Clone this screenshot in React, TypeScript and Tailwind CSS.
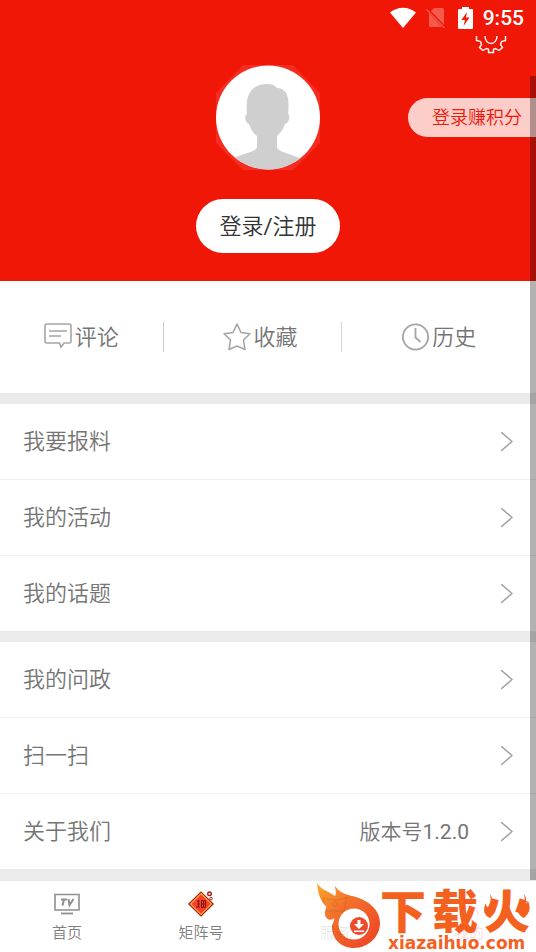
import React from 'react';

const FONT = "font-['Roboto','Noto_Sans_CJK_SC',sans-serif]";

const REPORT_ITEMS = [{ label: '我要报料' }, { label: '我的活动' }, { label: '我的话题' }];

const SERVICE_ITEMS = [
  { label: '我的问政' },
  { label: '扫一扫' },
  { label: '关于我们', version: '1.2.0' },
];

const StatusBar: React.FC = () => (
  <div className="flex h-9 items-center justify-end pr-3 text-white">
    <svg width="28" height="22" viewBox="0 0 28 22" fill="currentColor">
      <path d="M0 5.500C7.500-.8 18.500-.8 26 5.500L13 21Z" />
    </svg>
    <svg className="ml-2" width="20" height="22" viewBox="0 0 20 22">
      <path d="M8 1h8.500a1.500 1.500 0 0 1 1.500 1.500V20H4.500A1.500 1.500 0 0 1 3 18.500V6Z" fill="#f65a4d" />
      <path d="M1 2l18 19" stroke="#ef1706" strokeWidth="3" />
      <path d="M.5 2.500l18 18.500" stroke="#f4584b" strokeWidth="1.500" />
    </svg>
    <svg className="ml-3" width="15" height="22" viewBox="0 0 15 22">
      <path d="M4 0h7v2h3a1 1 0 0 1 1 1v18a1 1 0 0 1-1 1H1a1 1 0 0 1-1-1V3a1 1 0 0 1 1-1h3Z" fill="#fff" />
      <path d="M9 5L3.500 13H7L5.500 19 11.500 10.500H8Z" fill="#f01706" />
    </svg>
    <span className="ml-[10px] text-[21px] font-medium leading-6">9:55</span>
  </div>
);

const Avatar: React.FC = () => (
  <svg className="mx-auto block" width="106" height="106" viewBox="0 0 106 106">
    <path d="M28 0H78L105 28V78L78 105H28L1 78V28Z" fill="#f42d20" />
    <circle cx="53" cy="52.500" r="52" fill="#fff" />
    <clipPath id="avatar-clip">
      <circle cx="53" cy="52.500" r="52" />
    </clipPath>
    <path
      clipPath="url(#avatar-clip)"
      fill="#cfcfcf"
      d="M32 49C30 32 35 19 52 19c5 0 8 1 10 4 10 0 13 10 11 26 2 0 2 9-3 10-2 6-5 9-8 12v11c0 5 16 7 24 12v14H17V94c8-5 25-7 25-12V71c-4-3-7-8-8-12-4-1-5-9-2-10Z"
    />
  </svg>
);

const CommentIcon: React.FC = () => (
  <svg width="30" height="30" viewBox="0 0 30 30" fill="none" stroke="#a5a5a5" strokeWidth="1.600">
    <path d="M4 2h21a2 2 0 0 1 2 2v15a2 2 0 0 1-2 2h-5l-3 4-1.500-4H3a2 2 0 0 1-2-2V4a2 2 0 0 1 2-2Z" />
    <path d="M5 9h18M5 14h12" />
  </svg>
);

const StarIcon: React.FC = () => (
  <svg width="30" height="30" viewBox="0 0 30 30" fill="none" stroke="#a5a5a5" strokeWidth="1.600" strokeLinejoin="round">
    <path d="M15 2l4 8.500 9 1.200-6.500 6.300 1.500 9.500-8-3.500-8 3.500 1.500-9.500L2 11.700l9-1.200Z" />
  </svg>
);

const ClockIcon: React.FC = () => (
  <svg width="30" height="30" viewBox="0 0 30 30" fill="none" stroke="#a5a5a5" strokeWidth="1.800">
    <circle cx="14.500" cy="15" r="12.600" />
    <path d="M14.500 6v9.500l5 4.500" />
  </svg>
);

const QUICK_LINKS = [
  { label: '评论', icon: <CommentIcon />, divider: 'bg-[#cccccc]' },
  { label: '收藏', icon: <StarIcon />, divider: 'bg-[#d8d8d8]' },
  { label: '历史', icon: <ClockIcon />, divider: 'bg-transparent' },
];

const MenuList: React.FC<{ items: { label: string; version?: string }[] }> = ({ items }) => (
  <ul className="divide-y divide-[#efefef] bg-white">
    {items.map((item) => (
      <li key={item.label}>
        <button className="flex h-[75px] w-full items-center px-[23px] text-left text-[22px] leading-8">
          <span className="flex-1">{item.label}</span>
          {item.version && (
            <span className="mr-8 text-[21px]">
              版本号<span className="font-normal">{item.version}</span>
            </span>
          )}
          <svg width="12" height="20" viewBox="0 0 12 20" fill="none" stroke="#a0a0a0" strokeWidth="1.400">
            <path d="M0 0L11 9.500 0 19" />
          </svg>
        </button>
      </li>
    ))}
  </ul>
);

const TvIcon: React.FC = () => (
  <svg width="28" height="26" viewBox="0 0 28 26" fill="none" stroke="#8f8f8f">
    <path d="M2 3.500h24V19H2Z" strokeWidth="1.600" />
    <path d="M8 22.500h12" strokeWidth="1.800" />
    <path d="M8 8.500h6M11 8.500l-1.500 6M15.500 8l1 6 4-6" strokeWidth="2" />
  </svg>
);

const MatrixIcon: React.FC = () => (
  <svg width="28" height="26" viewBox="0 0 28 26">
    <path d="M14 .3L27 13 14 25.700 1 13Z" fill="#a51a10" />
    <path d="M14 2.500L24.500 13 14 23.500 3.500 13Z" fill="#f7402c" stroke="#f5a83c" strokeWidth="1.200" />
    <path d="M10 10h3M10 13h3M9 16h4M11.500 9v7M14.500 9.500h4v7h-4ZM14.500 13h4M16.500 9.500v7" fill="none" stroke="#8c1610" />
    <circle cx="22.500" cy="2.800" r="1.800" fill="#fff" stroke="#a51a10" strokeWidth="1.400" />
    <circle cx="24" cy="7.500" r="1.300" fill="#fff" stroke="#a51a10" />
  </svg>
);

const ServiceIcon: React.FC = () => (
  <svg width="28" height="26" viewBox="0 0 28 26" fill="none" stroke="currentColor">
    <path d="M2 6c8 4 16 4 24 0l-3 14H5Z" />
    <path d="M14 10l3 3-3 3-3-3Z" />
  </svg>
);

const MineIcon: React.FC = () => (
  <svg width="28" height="26" viewBox="0 0 28 26" fill="none" stroke="currentColor">
    <circle cx="14" cy="8" r="5" />
    <path d="M5 24c0-12 18-12 18 0" />
  </svg>
);

const TABS = [
  { label: '首页', icon: <TvIcon />, color: 'text-[#808080]' },
  { label: '矩阵号', icon: <MatrixIcon />, color: 'text-[#808080]' },
  { label: '服务', icon: <ServiceIcon />, color: 'text-black/10' },
  { label: '我的', icon: <MineIcon />, color: 'text-red-600/15' },
];

const SmallFlame: React.FC<{ className: string }> = ({ className }) => (
  <svg className={className} width="12" height="24" viewBox="0 0 12 24">
    <path d="M6 0c3 4 2 7 1 10 1 0 2-1 3-3 3 7 2 12-4 17C-1 21-1 15 2 9c0 3 1 4 2 4C7 8 7 4 6 0Z" fill="#f4611f" />
  </svg>
);

const Watermark: React.FC = () => (
  <div className="pointer-events-none absolute bottom-0 right-[6px] flex h-[71px] items-start text-[#f4611f]">
    <svg width="64" height="69" viewBox="0 0 64 69">
      <defs>
        <linearGradient id="flame" x1="0" y1="0" x2="1" y2="1">
          <stop offset="0" stopColor="#fdaa2c" />
          <stop offset=".35" stopColor="#f4742c" />
          <stop offset="1" stopColor="#ec3f26" />
        </linearGradient>
      </defs>
      <path
        fill="url(#flame)"
        fillRule="evenodd"
        d="M1 2C4 8 12 10 19 15c2-3 0-7 0-10 4 6 9 8 17 10 17 4 28 14 28 27 0 14-12 25-26 25-13 0-22-9-22-21 0-4 3-6 2-9-2 3-8 2-9-3-1-4 2-6 1-9C5 21 2 14 1 2ZM38 27.500a15.500 15.500 0 1 0 0 31 15.500 15.500 0 1 0 0-31Z"
      />
      <circle cx="43" cy="45" r="9" fill="#ec4a2a" />
      <path d="M41.500 39h3v4h3.500l-5 5-5-5h3.500ZM38 49.500h10v1.500H38Z" fill="#fff" />
    </svg>
    <div className="w-[150px] pt-[9px]">
      <div className="relative flex justify-between text-[46px] font-black leading-[44px]">
        <span>下</span>
        <span>载</span>
        <span>火</span>
        <SmallFlame className="absolute right-[34px] top-1" />
        <SmallFlame className="absolute right-0 top-1" />
      </div>
      <div className="ml-2 font-['DejaVu_Sans',sans-serif] text-[17px] font-bold leading-[18px]">xiazaihuo.com</div>
    </div>
  </div>
);

export default function App() {
  return (
    <div className={`relative min-h-screen bg-[#ebebeb] font-[350] text-[#757575] ${FONT}`}>
      <header className="relative h-[281px] bg-[#f01706]">
        <StatusBar />
        <button aria-label="设置" className="absolute right-[29px] top-9 block">
          <svg width="32" height="18" viewBox="0 0 32 18" fill="none" stroke="#fff" strokeWidth="1.400">
            <path d="M1.500 0v4.500l4 1 1 3-2 3 3.500 3 3.500-2 2 .7V16.500h5v-3.300l2-.7 3.500 2 3.500-3-2-3 1-3 4-1V0" />
            <path d="M10 0c0 10 12 10 12 0" />
          </svg>
        </button>
        <button className="absolute right-0 top-[98px] h-[39px] rounded-l-full bg-[#fccdc9] pl-6 pr-[14px] text-lg text-[#f01706]">
          登录赚积分
        </button>
        <div className="pt-[29px]">
          <Avatar />
        </div>
        <button className="mx-auto mt-7 block h-[54px] rounded-full bg-white px-[23px] text-[22px] text-[#333]">
          登录<span className="font-normal">/</span>注册
        </button>
      </header>

      <section className="grid h-28 grid-cols-3 items-center bg-white">
        {QUICK_LINKS.map((link) => (
          <div key={link.label} className="flex items-center pr-[15px]">
            <button className="flex h-[30px] flex-1 items-center justify-center gap-px text-[22px]">
              {link.icon}
              {link.label}
            </button>
            <span className={`h-[30px] w-px ${link.divider}`} />
          </div>
        ))}
      </section>

      <main className="mt-[11px] grid gap-[11px]">
        <MenuList items={REPORT_ITEMS} />
        <MenuList items={SERVICE_ITEMS} />
      </main>

      <nav className="relative mt-3 grid h-[71px] grid-cols-4 bg-white">
        <Watermark />
        {TABS.map((tab) => (
          <a
            key={tab.label}
            href="#"
            className={`relative flex flex-col items-center pt-[10px] text-[15px] leading-6 ${tab.color}`}
          >
            {tab.icon}
            <span className="mt-1">{tab.label}</span>
          </a>
        ))}
      </nav>

      <div className="pointer-events-none absolute bottom-[72px] right-0 top-[76px] w-[6px] bg-black/30" />
    </div>
  );
}
